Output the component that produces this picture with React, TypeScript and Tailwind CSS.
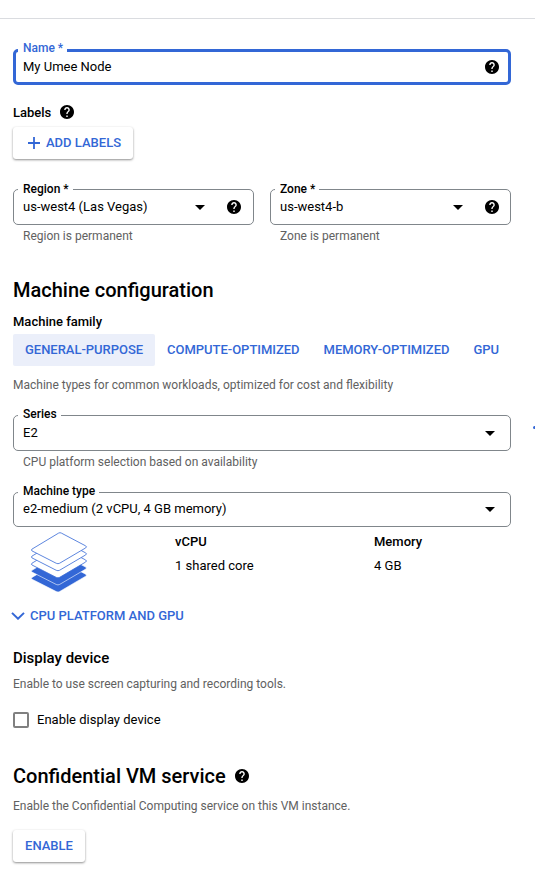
import type { ReactNode } from "react";

function HelpIcon({ className = "" }: { className?: string }) {
  return (
    <svg viewBox="2 2 20 20" className={`size-3.5 shrink-0 ${className}`} fill="#000">
      <path d="M12 2C6.48 2 2 6.48 2 12s4.48 10 10 10 10-4.48 10-10S17.52 2 12 2zm1 17h-2v-2h2v2zm2.07-7.75l-.9.92C13.45 12.9 13 13.5 13 15h-2v-.5c0-1.1.45-2.1 1.17-2.83l1.24-1.26c.37-.36.59-.86.59-1.41 0-1.1-.9-2-2-2s-2 .9-2 2H8c0-2.21 1.79-4 4-4s4 1.79 4 4c0 .88-.36 1.68-.93 2.25z" />
    </svg>
  );
}

function Arrow({ className = "" }: { className?: string }) {
  return (
    <svg viewBox="0 0 10 5" className={`h-[5px] w-2.5 shrink-0 ${className}`}>
      <path d="M0 0h10L5 5z" fill="#000" />
    </svg>
  );
}

type FieldProps = {
  label: string;
  value: string;
  focused?: boolean;
  className?: string;
  labelClass?: string;
  valueClass?: string;
  children: ReactNode;
};

function Field({
  label,
  value,
  focused = false,
  className = "h-9",
  labelClass = "-top-[9px] left-1",
  valueClass = "",
  children,
}: FieldProps) {
  return (
    <div
      className={`relative flex items-center rounded-[5px] ${
        focused ? "border-3 border-[#3367d6] pr-[9px] pl-[7px]" : "border border-[#80868b] pr-3 pl-[9px]"
      } ${className}`}
    >
      <span
        className={`absolute bg-white pr-1 pl-[5px] text-xs leading-4 font-medium ${labelClass}`}
      >
        {label}
      </span>
      <span className={`flex-1 ${valueClass}`}>{value}</span>
      {children}
    </div>
  );
}

function Hint({ className = "", children }: { className?: string; children: ReactNode }) {
  return <p className={`text-xs leading-4 text-[#616161] ${className}`}>{children}</p>;
}

function RaisedButton({ className = "", children }: { className?: string; children: ReactNode }) {
  return (
    <button
      className={`flex h-8 items-center rounded-[3px] bg-white font-medium text-[#3367d6] shadow-[0_1px_2px_rgba(0,0,0,0.28),0_1px_3px_rgba(0,0,0,0.2)] ${className}`}
    >
      {children}
    </button>
  );
}

const layers = [28.3, 21.2, 14.1, 7, 0];

function LayersIcon() {
  return (
    <svg viewBox="0 0 58 61" className="h-[61px] w-[58px]">
      {layers.map((y, i) => (
        <path
          key={y}
          transform={`translate(0 ${y})`}
          d="M28.6 1.1Q30 .3 31.4 1.1L55.7 13.9Q57.3 14.9 55.7 15.9L29.7 31.2Q28 32.2 26.3 31.3L2 18.9Q.6 18 2 17.1Z"
          fill={i < 2 ? "#3367d6" : "#fff"}
          stroke={i < 2 ? "#fff" : "#3367d6"}
          strokeWidth={i < 2 ? 0.6 : 0.8}
        />
      ))}
    </svg>
  );
}

const families = ["GENERAL-PURPOSE", "COMPUTE-OPTIMIZED", "MEMORY-OPTIMIZED", "GPU"];

export default function App() {
  return (
    <div className="h-[883px] w-[535px] overflow-hidden bg-white font-['Roboto',sans-serif] text-[13px] leading-4 text-black">
      <div className="h-[19px] border-b border-[#dadce0]" />
      <main className="flex flex-col pt-[30px] pr-6 pl-[13px]">
        <Field label="Name *" value="My Umee Node" focused labelClass="-top-3 left-[2px] text-[#3367d6]">
          <HelpIcon />
        </Field>

        <div className="mt-5 flex h-4 items-center gap-[9px]">
          <span className="font-medium">Labels</span>
          <HelpIcon className="-mt-0.5" />
        </div>
        <RaisedButton className="mt-1.5 w-[120px] gap-1.5 pl-[15px]">
          <svg viewBox="0 0 12 12" className="size-3">
            <path d="M6 0v12M0 6h12" stroke="#3367d6" strokeWidth="1.8" />
          </svg>
          ADD LABELS
        </RaisedButton>

        <div className="mt-[30px] grid grid-cols-2 gap-4">
          <div>
            <Field label="Region *" value="us-west4 (Las Vegas)">
              <Arrow className="mr-[22px]" />
              <HelpIcon />
            </Field>
            <Hint className="mt-[3px] pl-2.5">Region is permanent</Hint>
          </div>
          <div>
            <Field label="Zone *" value="us-west4-b" className="h-9 pr-[11px]">
              <Arrow className="mr-[22px]" />
              <HelpIcon />
            </Field>
            <Hint className="mt-[3px] pl-2.5">Zone is permanent</Hint>
          </div>
        </div>

        <h2 className="mt-[34px] text-xl leading-6 font-medium">Machine configuration</h2>
        <h3 className="mt-3 font-medium">Machine family</h3>
        <div className="mt-1 flex h-8 font-medium tracking-[-0.025px] whitespace-nowrap text-[#3367d6]">
          {families.map((name, i) => (
            <span key={name} className={`flex items-center px-3 ${i === 0 ? "rounded-[2px] bg-[#ebeffa]" : ""}`}>
              {name}
            </span>
          ))}
        </div>
        <Hint className="mt-[11px]">Machine types for common workloads, optimized for cost and flexibility</Hint>

        <div className="relative mt-[22px]">
          <Field label="Series" value="E2" labelClass="-top-2.5 left-1">
            <Arrow className="mr-[3px]" />
          </Field>
          <span className="absolute top-[11px] -right-6 h-[3px] w-[2px] rounded-l-full bg-[#3367d6]" />
        </div>
        <Hint className="mt-[3px] pl-2.5">CPU platform selection based on availability</Hint>

        <Field
          label="Machine type"
          value="e2-medium (2 vCPU, 4 GB memory)"
          className="mt-[22px] h-[35px]"
          labelClass="-top-2.5 left-1"
          valueClass="-mt-0.5"
        >
          <Arrow className="mr-[3px] -mt-px" />
        </Field>

        <div className="mt-[5px] flex h-[60px]">
          <div className="w-[162px] pl-[17px]">
            <LayersIcon />
          </div>
          <div className="flex w-[199px] flex-col gap-2 pt-[2px]">
            <span className="font-medium">vCPU</span>
            <span>1 shared core</span>
          </div>
          <div className="flex flex-col gap-2 pt-[2px]">
            <span className="font-medium">Memory</span>
            <span>4 GB</span>
          </div>
        </div>

        <div className="mt-4 -ml-[2px] flex h-4 items-center gap-[5px] font-medium text-[#3367d6]">
          <svg viewBox="0 0 14 8" className="h-2 w-[14px]">
            <path d="M1 .9 7 6.7 13 .9" fill="none" stroke="#3367d6" strokeWidth="2" />
          </svg>
          CPU PLATFORM AND GPU
        </div>

        <h3 className="mt-6 text-[15px] leading-5 font-medium">Display device</h3>
        <Hint className="mt-2">Enable to use screen capturing and recording tools.</Hint>
        <label className="mt-5 flex items-center gap-2">
          <span className="size-4 rounded-[2px] border-2 border-[#808080]" />
          Enable display device
        </label>

        <div className="mt-9 flex h-6 items-center gap-[9px]">
          <h2 className="text-xl leading-6 font-medium">Confidential VM service</h2>
          <HelpIcon />
        </div>
        <Hint className="mt-2.5">Enable the Confidential Computing service on this VM instance.</Hint>
        <RaisedButton className="mt-4 w-[72px] justify-center">ENABLE</RaisedButton>
      </main>
    </div>
  );
}
